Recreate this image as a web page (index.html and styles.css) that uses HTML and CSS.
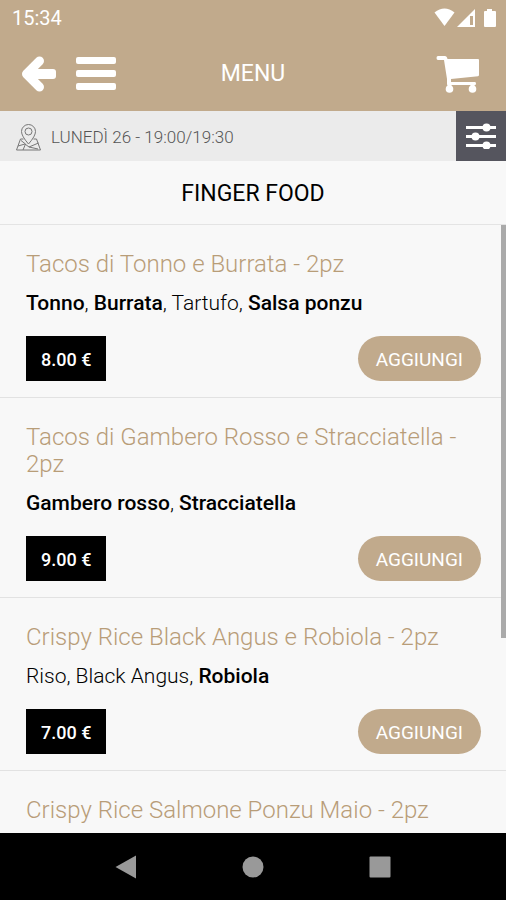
FILE: index.html
```html
<!DOCTYPE html>
<html lang="it">
<head>
  <meta charset="UTF-8">
  <title>Menu</title>
  <meta name="viewport" content="width=device-width, initial-scale=1.0">
  <link rel="stylesheet" href="styles.css">
</head>
<body>
  <div class="status-bar">
    <span>15:34</span>
    <svg class="status-icons" width="64" height="20" viewBox="0 0 64 20" fill="#fff">
      <path d="M0.500 4.500Q10.500 -3.500 20.500 4.500L10.500 18Z"/>
      <path fill-rule="evenodd" d="M41 1V19H23ZM36 8V17H39V8Z"/>
      <path d="M53 1h5v2h3q1 0 1 1v14q0 1-1 1H51q-1 0-1-1V4q0-1 1-1h2z"/>
    </svg>
  </div>

  <header class="header">
    <div class="header-left">
      <button class="icon-btn" aria-label="Indietro">
        <svg width="36" height="38" viewBox="0 0 36 38" fill="none" stroke="#fff" stroke-width="9" stroke-linecap="round" stroke-linejoin="round">
          <path d="M19.500 6L6.500 19L19.500 32"/>
          <rect x="8" y="14" width="28" height="10" rx="3" fill="#fff" stroke="none"/>
        </svg>
      </button>
      <button class="icon-btn" aria-label="Menu">
        <svg width="40" height="34" viewBox="0 0 40 34" fill="#fff">
          <rect width="40" height="7" rx="2"/>
          <rect y="13" width="40" height="7" rx="2"/>
          <rect y="26" width="40" height="7" rx="2"/>
        </svg>
      </button>
    </div>
    <h1 class="header-title">MENU</h1>
    <button class="icon-btn cart" aria-label="Carrello">
      <svg width="44" height="38" viewBox="0 0 44 38" fill="#fff">
        <path fill-rule="evenodd" d="M2 1H9Q10.500 1 11 2.500L11.500 4H42Q43 4 43 5V20Q43 21 42 21.200L15 24V27H39Q40 27 40 28.500Q40 30 39 30H12Q11 30 11 29V24L8 5H2Q0.500 5 0.500 3Q0.500 1 2 1Z"/>
        <circle cx="13.500" cy="34" r="3.800"/>
        <circle cx="36.500" cy="34" r="3.800"/>
        <path d="M11.500 29h4v4h-4zM34.500 29h4v4h-4z"/>
      </svg>
    </button>
  </header>

  <div class="info-bar">
    <div class="info-text">
      <svg width="25" height="27" viewBox="0 0 25 27" fill="none" stroke="#777" stroke-width="1">
        <path d="M12.500 20Q5.500 12 5.500 7.500A7 7 0 0 1 19.500 7.500Q19.500 12 12.500 20Z"/>
        <circle cx="12.500" cy="7.500" r="3.500"/>
        <path d="M7.500 15H4.500L0.500 26H24.500L20.500 15H17.500M2 22L9 20L13 23L22 25M5 16.500L9.500 20L7 26M13 23L22.500 19"/>
      </svg>
      <span>LUNEDÌ 26 - 19:00/19:30</span>
    </div>
    <button class="filter-btn" aria-label="Filtri">
      <svg width="30" height="26" viewBox="0 0 30 26" fill="#fff">
        <path d="M0 3h30v3H0zM0 12h30v3H0zM0 21h30v3H0z"/>
        <circle cx="20.500" cy="4.500" r="4"/>
        <circle cx="9.500" cy="13.500" r="4"/>
        <circle cx="20.500" cy="22.500" r="4"/>
      </svg>
    </button>
  </div>

  <h2 class="category">FINGER FOOD</h2>

  <main class="list">
    <article class="item">
      <h3 class="item-name">Tacos di Tonno e Burrata - 2pz</h3>
      <p class="item-desc"><b>Tonno</b>, <b>Burrata</b>, Tartufo, <b>Salsa ponzu</b></p>
      <div class="item-row">
        <span class="price">8.00 €</span>
        <button class="add-btn">AGGIUNGI</button>
      </div>
    </article>
    <article class="item">
      <h3 class="item-name">Tacos di Gambero Rosso e Stracciatella - 2pz</h3>
      <p class="item-desc"><b>Gambero rosso</b>, <b>Stracciatella</b></p>
      <div class="item-row">
        <span class="price">9.00 €</span>
        <button class="add-btn">AGGIUNGI</button>
      </div>
    </article>
    <article class="item">
      <h3 class="item-name">Crispy Rice Black Angus e Robiola - 2pz</h3>
      <p class="item-desc">Riso, Black Angus, <b>Robiola</b></p>
      <div class="item-row">
        <span class="price">7.00 €</span>
        <button class="add-btn">AGGIUNGI</button>
      </div>
    </article>
    <article class="item">
      <h3 class="item-name">Crispy Rice Salmone Ponzu Maio - 2pz</h3>
    </article>
    <div class="scroll-thumb"></div>
  </main>

  <nav class="nav-bar">
    <button class="icon-btn" aria-label="Indietro">
      <svg width="24" height="24" viewBox="0 0 24 24" fill="#999"><path d="M1.500 12L22 0.500V23.500Z"/></svg>
    </button>
    <button class="icon-btn" aria-label="Home">
      <svg width="24" height="24" viewBox="0 0 24 24" fill="#999"><circle cx="12" cy="12" r="10.500"/></svg>
    </button>
    <button class="icon-btn" aria-label="Recenti">
      <svg width="24" height="24" viewBox="0 0 24 24" fill="#999"><rect x="1.500" y="1.500" width="21" height="21" rx="1"/></svg>
    </button>
  </nav>
</body>
</html>
```

FILE: styles.css
```css
* {
  box-sizing: border-box;
}
body {
  margin: 0;
  height: 100vh;
  display: flex;
  flex-direction: column;
  background: #f8f8f8;
  color: #000;
  font-family: Roboto, "Liberation Sans", sans-serif;
}
h1, h2, h3, p {
  margin: 0;
  font-weight: 400;
}
button {
  font-family: inherit;
  border: none;
  padding: 0;
  cursor: pointer;
}
svg {
  display: block;
}
.icon-btn {
  background: none;
}

/* top bars */
.status-bar {
  flex: none;
  display: flex;
  justify-content: space-between;
  align-items: center;
  height: 36px;
  padding: 0 8px 0 12px;
  background: #c1aa8c;
  color: #fff;
  font-size: 20px;
}
.header {
  flex: none;
  display: grid;
  grid-template-columns: 1fr auto 1fr;
  align-items: center;
  height: 75px;
  padding: 0 20px;
  background: #c1aa8c;
  color: #fff;
}
.header-left {
  display: flex;
  align-items: center;
  gap: 20px;
}
.header-title {
  font-size: 23px;
}
.cart {
  justify-self: end;
  padding-right: 6px;
}
.info-bar {
  flex: none;
  display: flex;
  justify-content: space-between;
  height: 50px;
  background: #ebebeb;
}
.info-text {
  display: flex;
  align-items: center;
  gap: 10px;
  padding: 2px 0 0 16px;
  color: #555;
  font-size: 17px;
  font-weight: 300;
}
.filter-btn {
  display: flex;
  align-items: center;
  justify-content: center;
  width: 50px;
  background: #55555e;
}
.category {
  flex: none;
  height: 64px;
  line-height: 66px;
  border-bottom: 1px solid #e4e4e4;
  text-align: center;
  font-size: 23px;
}

/* dishes */
.list {
  position: relative;
  flex: 1;
  min-height: 0;
  overflow: hidden;
}
.item {
  padding: 26px 25px 16px 26px;
  border-bottom: 1px solid #e2e2e2;
}
.item-name {
  color: #b89d78;
  font-size: 24px;
  font-weight: 300;
  line-height: 27px;
}
.item-desc {
  margin-top: 13px;
  font-size: 21px;
  font-weight: 300;
  line-height: 24px;
}
.item-desc b {
  font-weight: 500;
}
.item-row {
  display: flex;
  justify-content: space-between;
  margin-top: 21px;
}
.price {
  height: 45px;
  padding: 0 15px;
  background: #000;
  color: #fff;
  font-size: 18px;
  font-weight: 500;
  line-height: 47px;
}
.add-btn {
  height: 45px;
  padding: 2px 18px 0;
  border-radius: 23px;
  background: #c1aa8c;
  color: #fff;
  font-size: 19px;
}
.scroll-thumb {
  position: absolute;
  top: 0;
  right: 0;
  width: 5px;
  height: 68%;
  background: #aaa;
}

.nav-bar {
  flex: none;
  display: flex;
  justify-content: center;
  align-items: center;
  gap: 103px;
  height: 67px;
  background: #000;
}
```
